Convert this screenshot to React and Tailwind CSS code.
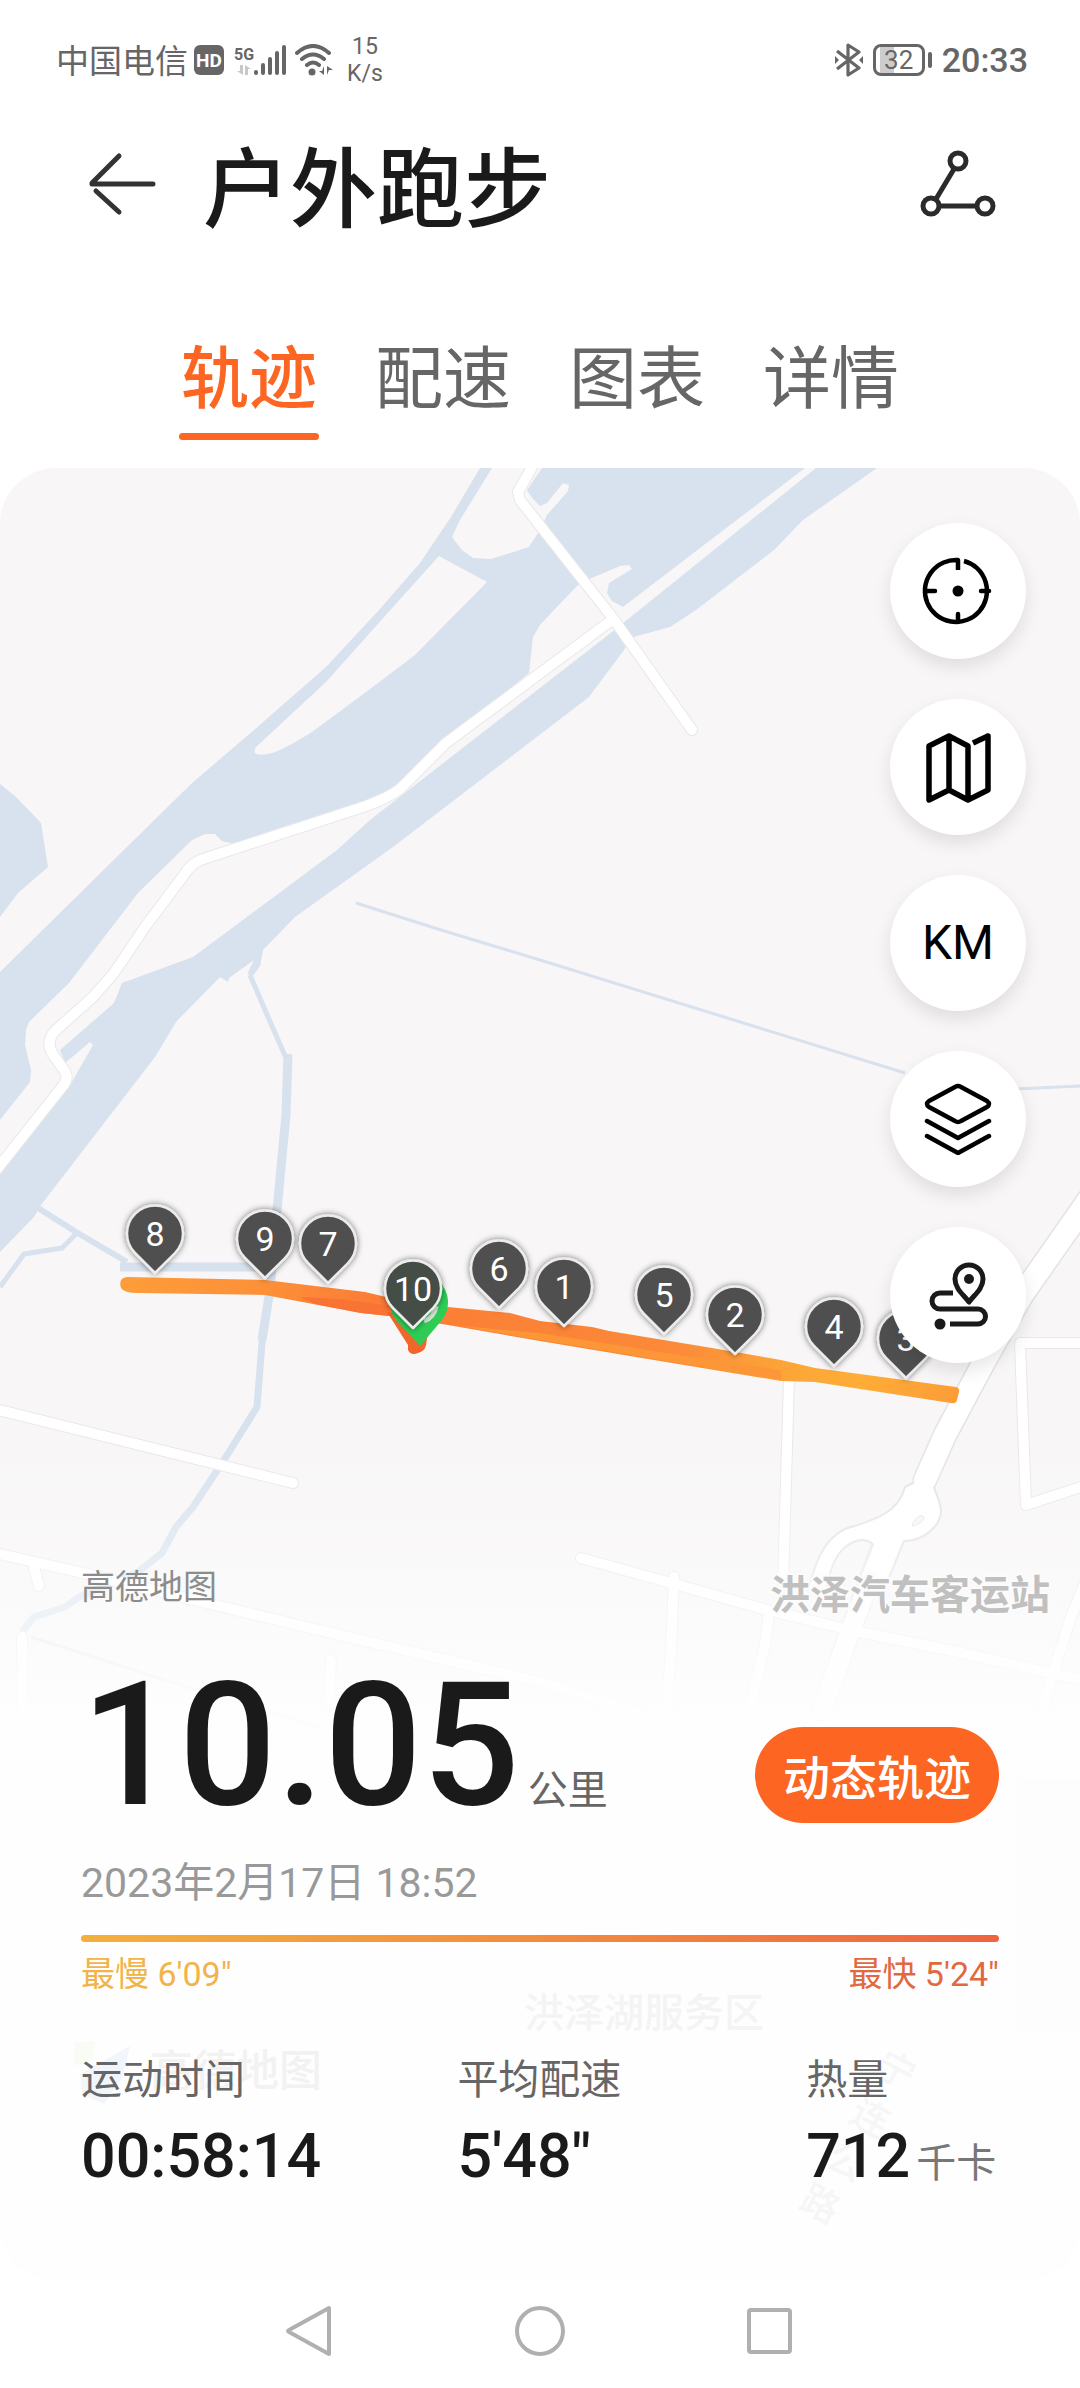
/**
 * RunDetailPage — outdoor run summary: track map, tools and key figures.
 */
import React, { useState } from 'react'

const TABS = ['轨迹', '配速', '图表', '详情']

// Tip of each kilometre pin, in map units. Later pins are drawn on top.
const PINS = [
  { km: 8,  x: 155, y: 1273 },
  { km: 9,  x: 265, y: 1278 },
  { km: 7,  x: 328, y: 1283 },
  { km: 6,  x: 499, y: 1308 },
  { km: 1,  x: 564, y: 1326 },
  { km: 5,  x: 664, y: 1334 },
  { km: 2,  x: 735, y: 1354 },
  { km: 4,  x: 834, y: 1366 },
  { km: 3,  x: 906, y: 1378 },
  { km: 10, x: 413, y: 1328 },
]

const STATS = [
  { label: '运动时间', value: '00:58:14' },
  { label: '平均配速', value: '5\'48"' },
  { label: '热量',     value: '712', unit: '千卡' },
]

const ROADS = [
  'M536 460 L518 492 L520 500 L612 617 L692 730',
  'M612 620 L446 743 L400 789 Q390 797 366 806 L200 860 Q190 865 184 875 L145 927 L114 973 L93 997 L56 1030 Q44 1042 54 1056 L64 1070 Q70 1078 62 1087 L-6 1173',
  'M-5 1409 L293 1483',
  'M-5 1553 L83 1573 L207 1603 L310 1628 L540 1682 L640 1712',
  'M34 1567 L39 1586',
  'M22 1637 L24 1760',
  'M789 1378 L783 1585',
  'M581 1558 L671 1583 L767 1610 L850 1630 L953 1651 L1090 1682',
  'M674 1577 L671 1650 L666 1715',
  'M769 1613 L764 1650 L750 1705',
  'M1090 1343 L1020 1343 L1026 1505 L1090 1484',
  'M1090 1570 L1070 1620 L1051 1680 L1030 1760',
  'M331 1660 L329 1700',
]

const HIGHWAY = 'M1090 1198 L1022 1295 L985 1360 L945 1435 L925 1480'

function Pin({ km, x, y }) {
  return (
    <g transform={`translate(${x} ${y})`}>
      <path
        d="M0 0 L-20 -20 A28 28 0 1 1 20 -20 Z"
        fill={km === 10 ? '#444d46' : '#4f4f4f'}
        stroke="#ececec"
        strokeWidth="2.5"
        strokeLinejoin="round"
        filter="url(#pinShadow)"
      />
      <text y="-27" textAnchor="middle" fontSize="34" fill="#fff">{km}</text>
    </g>
  )
}

function TrackMap() {
  return (
    <svg
      className="absolute inset-0 w-full h-full"
      viewBox="0 468 1080 1812"
      preserveAspectRatio="xMidYMin slice"
      role="img"
      aria-label="跑步轨迹地图"
    >
      <defs>
        <linearGradient id="pace" gradientUnits="userSpaceOnUse" x1="120" y1="0" x2="960" y2="0">
          <stop offset="0" stopColor="#fd9d38" />
          <stop offset="0.17" stopColor="#fd9038" />
          <stop offset="0.3" stopColor="#fb7d36" />
          <stop offset="0.5" stopColor="#fb8336" />
          <stop offset="0.66" stopColor="#fb8a3a" />
          <stop offset="0.8" stopColor="#fca638" />
          <stop offset="0.88" stopColor="#fead36" />
          <stop offset="1" stopColor="#fd9c38" />
        </linearGradient>
        <linearGradient id="fade" x1="0" y1="0" x2="0" y2="1">
          <stop offset="0" stopColor="#fefefe" stopOpacity="0" />
          <stop offset="0.25" stopColor="#fefefe" stopOpacity="0.2" />
          <stop offset="1" stopColor="#fefefe" stopOpacity="0.93" />
        </linearGradient>
        <filter id="pinShadow" x="-40%" y="-40%" width="180%" height="180%">
          <feDropShadow dx="0" dy="0" stdDeviation="3" floodColor="#000" floodOpacity="0.55" />
        </filter>
      </defs>

      <rect x="0" y="468" width="1080" height="1812" fill="#f8f6f6" />

      {/* Water */}
      <g fill="#d7e2ee">
        <path d="M480 468 L451 517 L420 563 L379 610 L326 667 L254 730 L192 783 L134 840 L0 972 V1120 L30 1082 L31 1070 L25 1045 L26 1030 L29 1022 L69 983 L138 893 L192 840 L205 834 L215 834 L222 841 L230 843 L246 843 L375 800 L402 780 L446 740 L529 673 L533 637 L540 625 L554 610 L580 583 L620 566 L629 565 L632 569 L609 583 L607 593 L612 601 L623 607 L700 548 L805 468 H542 L527 490 L533 499 L540 506 L547 503 L563 483 L569 485 L568 491 L547 515 L540 530 L529 547 L491 559 L473 558 L462 550 L452 537 L460 520 L492 468 Z" />
        <path d="M816 468 H877 L803 520 L774 550 L696 610 L670 627 L630 638 L624 650 L589 697 L393 847 L295 917 L263 950 L260 966 L250 980 L248 972 L254 960 L229 978 L228 982 L220 977 L176 1022 L155 1057 L41 1205 L34 1217 L0 1252 V1172 L69 1087 L93 1045 L90 1042 L65 1063 L60 1050 L114 1003 L122 983 L193 957 L337 850 L370 820 L612 632 Z" />
        <path d="M0 784 L16 797 L41 823 L48 867 L18 893 L0 917 Z" />
      </g>
      <path d="M439 556 L487 582 L415 655 L366 692 L312 732 Q280 752 268 754 Q250 757 256 747 L326 682 L402 597 Z" fill="#f8f6f6" />
      <g fill="none" stroke="#d7e2ee" strokeLinejoin="round">
        <path d="M356 903 L441 930 L540 960 L905 1073 M1015 1089 L1080 1086" strokeWidth="3" />
        <path d="M250 975 L268 1017 L286 1058" strokeWidth="5" />
        <path d="M288 1054 L286 1115 L277 1210 L270 1290 L262 1340" strokeWidth="9" />
        <path d="M263 1330 L257 1407 L224 1460 L193 1507 L176 1527 L162 1553 L138 1572 L79 1597 L65 1607 L34 1617 L22 1632" strokeWidth="7" />
        <path d="M38 1208 L76 1232 L127 1262" strokeWidth="6" />
        <path d="M120 1267 H265" strokeWidth="9" />
        <path d="M76 1234 L62 1248 L24 1254 L0 1287" strokeWidth="5" />
      </g>
      <path d="M31 1637 L165 1680 L318 1727" fill="none" stroke="#e6e4ea" strokeWidth="3" />

      {/* Roads, grey casing below the white line */}
      <g fill="none" strokeLinecap="round" strokeLinejoin="round">
        <g stroke="#e9e8e9" strokeWidth="12">
          {ROADS.map(d => <path key={d} d={d} />)}
        </g>
        <path d={HIGHWAY} stroke="#e4e3e4" strokeWidth="25" />
        <path d="M884 1540 L850 1632 L822 1710" stroke="#e9e8e9" strokeWidth="22" />
        <path d="M905 1487 C898 1515 870 1521 845 1529 C822 1540 815 1565 808 1590 L826 1590 C830 1570 836 1545 860 1540 C880 1540 880 1555 868 1585 L886 1585 L904 1541 C925 1541 940 1525 941 1512 C941 1498 931 1490 933 1473 Z" fill="#fff" stroke="#e4e3e4" strokeWidth="2" />
        <g stroke="#fff" strokeWidth="10">
          {ROADS.map(d => <path key={d} d={d} />)}
        </g>
        <path d={HIGHWAY} stroke="#fff" strokeWidth="22" />
        <path d="M884 1545 L850 1632 L822 1710" stroke="#fff" strokeWidth="19" />
        <path d="M913 1523 Q920 1512 924 1517 Q925 1522 913 1526 Z" fill="#f8f6f6" stroke="#e4e3e4" strokeWidth="1" />
      </g>

      {/* Run track, coloured by pace */}
      <path
        d="M127 1277 L265 1280 L365 1292 L386 1297 L448 1307 L510 1313 L540 1321 L592 1327 L609 1331 L712 1348 L781 1360 L815 1368 L956 1387 Q960 1388 959 1392 L957 1400 Q956 1404 951 1403 L815 1382 L781 1381 L660 1361 L540 1341 L448 1325 L389 1316 L361 1313 L265 1295 L138 1293 Q124 1293 121 1288 Q118 1278 127 1277 Z"
        fill="url(#pace)"
      />
      <path d="M300 1297 L340 1299 L390 1306 L390 1316 L361 1313 L315 1304 Z" fill="#f97334" />
      <path d="M460 1326 L540 1333 L660 1352 L781 1370 L781 1380 L660 1360 L540 1340 Z" fill="#fc9636" />
      <path d="M387 1312 L408 1345 V1350 Q411 1356 418 1353 Q425 1351 426 1345 L430 1320 Z" fill="#f0662b" />
      <path d="M420 1346 L396 1320 A29 29 0 1 1 442 1320 Z" fill="#2ecc55" />
      <path d="M424 1321 A18 18 0 0 0 436 1306" fill="none" stroke="#d5ead9" strokeWidth="5" />

      <rect x="0" y="1440" width="1080" height="270" fill="url(#fade)" />
      <rect x="0" y="1710" width="1080" height="570" fill="#fefefe" fillOpacity="0.93" />

      {PINS.map(p => <Pin key={p.km} {...p} />)}

      {/* Place names */}
      <g fontWeight="500">
        <text x="770" y="1609" fontSize="40" fontWeight="700" fill="#c0c0c0" stroke="#fcfcfc" strokeWidth="4" paintOrder="stroke">洪泽汽车客运站</text>
        <text x="524" y="2027" fontSize="40" fill="#f4f4f4">洪泽湖服务区</text>
        <text x="150" y="2086" fontSize="43" fill="#f2f2f2">高德地图</text>
      </g>
      <g fontSize="38" fill="#f6f6f6" fontWeight="500" textAnchor="middle">
        <text transform="translate(890 2082) rotate(28)">宁</text>
        <text transform="translate(864 2130) rotate(28)">连</text>
        <text transform="translate(840 2174) rotate(28)">公</text>
        <text transform="translate(814 2216) rotate(28)">路</text>
      </g>
      <path d="M80 2074 L130 2046 L122 2078 L104 2104 L82 2094 Z" fill="#f1f6fc" />
      <path d="M74 2042 L96 2042 L92 2060 L74 2066 Z" fill="#f9fcf5" />
    </svg>
  )
}

function ToolIcon({ children }) {
  return (
    <svg className="w-[72px] h-[72px]" viewBox="0 0 72 72" fill="none" stroke="#000" strokeWidth="4.5" strokeLinecap="round" strokeLinejoin="round">
      {children}
    </svg>
  )
}

const TOOLS = [
  {
    label: '定位',
    icon: (
      <ToolIcon>
        <path d="M42 6 A31 31 0 1 1 36 5 V15" strokeLinecap="butt" />
        <path d="M5 36 H13 M59 36 H67 M36 67 V59" />
        <circle cx="36" cy="36" r="5.5" fill="#000" stroke="none" />
      </ToolIcon>
    ),
  },
  {
    label: '地图类型',
    icon: (
      <ToolIcon>
        <path d="M7 69 V15 L27 5 L46 15 V69 L27 59 Z M27 5 V59 M46 69 L66 59 V5" strokeWidth="5.5" />
        <path d="M66 5 L51 12" strokeWidth="5.5" strokeLinecap="butt" />
      </ToolIcon>
    ),
  },
  { label: '公里标记', icon: <span className="text-[48px] leading-none font-normal text-black">KM</span> },
  {
    label: '图层',
    icon: (
      <ToolIcon>
        <path d="M33 4 Q36 2 39 4 L65 18 Q69 21 65 24 L39 38 Q36 40 33 38 L7 24 Q3 21 7 18 Z" />
        <path d="M5 38 L36 55 L67 38 M5 53 L36 70 L67 53" />
      </ToolIcon>
    ),
  },
  {
    label: '路线',
    icon: (
      <ToolIcon>
        <g stroke="#1a1a1a" strokeWidth="5" strokeLinecap="butt">
          <path d="M47 43 C42 36 33 30 33 20 A14 14 0 0 1 61 20 C61 30 52 36 47 43 Z" />
          <path d="M31 34 H18 A8 8 0 0 0 18 50 H56 A7.5 7.5 0 0 1 56 65 H28" />
        </g>
        <circle cx="47" cy="20" r="5" fill="#1a1a1a" stroke="none" />
        <circle cx="18" cy="65" r="5.5" fill="#1a1a1a" stroke="none" />
      </ToolIcon>
    ),
  },
]

function StatusBar() {
  return (
    <div className="flex items-center justify-between h-[120px] pl-14 pr-[52px] text-[#666]">
      <div className="flex items-center">
        <span className="pt-1 text-[33px] leading-10">中国电信</span>
        <span className="flex items-center justify-center w-[30px] h-[30px] ml-1.5 rounded-md bg-[#666] text-white text-[19px] leading-none font-bold">HD</span>
        <div className="flex items-end h-[32px] ml-2.5">
          <div className="flex flex-col items-center">
            <span className="text-[16px] leading-[18px] font-bold">5G</span>
            <svg className="w-[14px] h-[12px]" viewBox="0 0 14 12" fill="#c8c8c8">
              <path d="M6 1 V11 L0 7 H3 V1 Z M8 11 V1 L14 5 H11 V11 Z" />
            </svg>
          </div>
          <svg className="w-[33px] h-[32px]" viewBox="0 0 33 32" fill="#666">
            <rect x="0" y="26" width="4" height="5" rx="2" />
            <rect x="7" y="19" width="4" height="12" rx="2" />
            <rect x="14" y="13" width="4" height="18" rx="2" />
            <rect x="21" y="7" width="4" height="24" rx="2" />
            <rect x="28" y="1" width="4" height="30" rx="2" />
          </svg>
        </div>
        <svg className="w-[38px] h-[32px] ml-2" viewBox="0 0 38 32" fill="none" stroke="#666" strokeWidth="4" strokeLinecap="round">
          <path d="M2 9 Q18 -5 34 9 M7 15 Q18 6 29 15 M12 21 Q18 16 24 21" />
          <circle cx="17" cy="28" r="3.5" fill="#666" stroke="none" />
          <path d="M29 22 V31 L24 27 H27 Z M32 31 V22 L38 26 H34 Z" fill="#666" stroke="none" />
        </svg>
        <span className="ml-3.5 text-center text-[23px] leading-[27px]">15<br />K/s</span>
      </div>
      <div className="flex items-center">
        <svg className="w-[28px] h-[34px]" viewBox="0 0 28 34" fill="none" stroke="#666" strokeWidth="3.2" strokeLinejoin="round">
          <path d="M2 8 L24 25 L13 32 V2 L24 9 L2 26" />
          <path d="M0 13 V21 L4 17 Z M28 13 V21 L24 17 Z" fill="#666" stroke="none" />
        </svg>
        <span className="flex items-center justify-center w-[52px] h-[32px] ml-2.5 rounded-lg border-[3px] border-[#666] bg-[linear-gradient(90deg,transparent_4px,#ccc_4px,#ccc_18px,transparent_18px)] text-[26px] leading-none">32</span>
        <span className="w-1 h-4 ml-[3px] rounded-sm bg-[#666]" />
        <span className="ml-2.5 text-[34px] leading-10 font-medium">20:33</span>
      </div>
    </div>
  )
}

export default function App() {
  const [tab, setTab] = useState('轨迹')

  return (
    <div className="min-h-screen bg-white text-[#1a1a1a] font-[Roboto,'Noto_Sans_CJK_SC',sans-serif]" lang="zh-CN">
      <StatusBar />

      {/* Header */}
      <header className="flex items-center h-[128px] pl-[84px] pr-[80px]">
        <button type="button" aria-label="返回">
          <svg className="w-[76px] h-[68px]" viewBox="0 0 76 68" fill="none" stroke="#333" strokeWidth="5" strokeLinecap="round">
            <path d="M8 34 H69 M8 33 L35 6 M12 41 L35 62" />
          </svg>
        </button>
        <h1 className="ml-[43px] pt-3.5 text-[87px] leading-[112px] font-medium">户外跑步</h1>
        <button type="button" aria-label="分享轨迹" className="ml-auto">
          <svg className="w-[84px] h-[76px]" viewBox="0 0 84 76" fill="none" stroke="#2b2b2b" strokeWidth="5">
            <path d="M38 23 L20 53 M24 60 H61" />
            <circle cx="42" cy="15" r="8" />
            <circle cx="15" cy="60" r="8" />
            <circle cx="69" cy="60" r="8" />
          </svg>
        </button>
      </header>

      {/* Tabs */}
      <nav role="tablist" className="flex justify-center gap-[54px] pt-[86px] pb-7">
        {TABS.map(t => (
          <button
            key={t}
            type="button"
            role="tab"
            aria-selected={tab === t}
            onClick={() => setTab(t)}
            className={`flex flex-col items-center gap-[7px] w-[140px] text-[68px] leading-[92px] ${tab === t ? 'text-[#fd6522] font-medium' : 'text-[#666]'}`}
          >
            {t}
            <span className={`w-full h-[7px] rounded-full ${tab === t ? 'bg-[#fd6522]' : 'bg-transparent'}`} />
          </button>
        ))}
      </nav>

      {/* Map card */}
      <main className="relative overflow-hidden rounded-[56px]">
        <TrackMap />

        <div className="relative">
          <div className="flex flex-col items-end gap-10 pt-[55px] pr-[54px]">
            {TOOLS.map(t => (
              <button
                key={t.label}
                type="button"
                aria-label={t.label}
                className="flex items-center justify-center w-[136px] h-[136px] rounded-full bg-white shadow-[0_8px_18px_rgba(0,0,0,0.1)]"
              >
                {t.icon}
              </button>
            ))}
          </div>

          <section className="px-[81px] pt-[200px] pb-[88px]">
            <p className="text-[34px] leading-[48px] text-[#8c8c8c]">高德地图</p>

            <div className="flex items-end justify-between mt-12">
              <p className="flex items-baseline gap-2">
                <span className="text-[172px] leading-none font-medium">10.05</span>
                <span className="text-[40px] leading-none text-[#666]">公里</span>
              </p>
              <button type="button" className="h-24 px-7 pt-1.5 mb-2 rounded-full bg-[#fd6522] text-white text-[47px] leading-none font-medium">
                动态轨迹
              </button>
            </div>

            <p className="mt-7 text-[41px] leading-[48px] text-[#999]">2023年2月17日 18:52</p>

            {/* Pace scale */}
            <div className="h-[7px] mt-7 rounded-full bg-linear-to-r from-[#f3b03c] to-[#ee6440]" />
            <div className="flex justify-between mt-3 text-[34px] leading-10">
              <span className="text-[#f2b34a]">最慢 6'09"</span>
              <span className="text-[#e2683f]">最快 5'24"</span>
            </div>

            <dl className="grid grid-cols-[41%_38%_1fr] mt-[62px]">
              {STATS.map(s => (
                <div key={s.label}>
                  <dt className="text-[41px] leading-[48px] text-[#666]">{s.label}</dt>
                  <dd className="flex items-baseline gap-1.5 mt-4 text-[61px] leading-[72px] font-medium whitespace-nowrap">
                    {s.value}
                    {s.unit && <span className="text-[40px] leading-none font-normal text-[#777]">{s.unit}</span>}
                  </dd>
                </div>
              ))}
            </dl>
          </section>
        </div>
      </main>

      {/* System navigation */}
      <footer className="flex items-center justify-center gap-[178px] h-[108px] pb-1.5">
        <button type="button" aria-label="后退">
          <svg className="w-[52px] h-[52px]" viewBox="0 0 52 52" fill="none" stroke="#b0b0b0" strokeWidth="4" strokeLinejoin="round">
            <path d="M45 3 V49 L5 27 Q3 26 5 25 Z" />
          </svg>
        </button>
        <button type="button" aria-label="主屏幕">
          <svg className="w-[52px] h-[52px]" viewBox="0 0 52 52" fill="none" stroke="#b0b0b0" strokeWidth="4">
            <circle cx="26" cy="26" r="23" />
          </svg>
        </button>
        <button type="button" aria-label="最近任务">
          <svg className="w-[52px] h-[52px]" viewBox="0 0 52 52" fill="none" stroke="#b0b0b0" strokeWidth="4">
            <rect x="5" y="5" width="41" height="42" rx="2" />
          </svg>
        </button>
      </footer>
    </div>
  )
}
